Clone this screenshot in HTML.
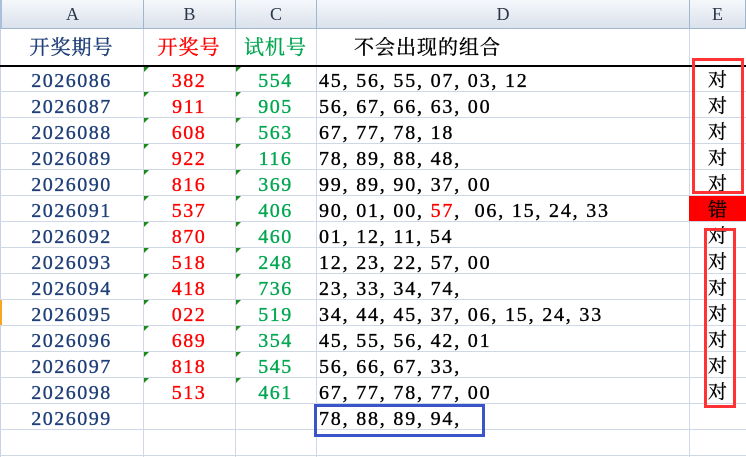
<!DOCTYPE html>
<html><head><meta charset="utf-8"><style>
*{margin:0;padding:0;box-sizing:border-box}
body{width:746px;height:457px;overflow:hidden;background:#fff;position:relative;font-family:"Liberation Serif","Noto Serif CJK SC",serif}
.hd{position:absolute;top:0;height:29px;background:linear-gradient(#f5f7fb,#dbe2ec);border-right:1px solid #9eb6ce;border-bottom:1px solid #9eb6ce;text-align:center;font-size:18px;line-height:29px;color:#2a3548}
.vl{position:absolute;top:29px;bottom:0;width:1px;background:#d0d7e5}
.hl{position:absolute;left:0;width:746px;height:1px;background:#d0d7e5}
.c{position:absolute;height:26px;line-height:30px;font-size:20px;letter-spacing:1.5px;white-space:nowrap;-webkit-text-stroke:0.35px currentColor}
.a{left:0;width:143px;text-align:center;color:#1f3f78}
.b{left:143px;width:92px;text-align:center;color:#f00}
.cc{left:235px;width:81px;text-align:center;color:#00a650}
.d{left:319px;color:#000;letter-spacing:1.8px}
.e{left:689px;width:57px;text-align:center;color:#000;letter-spacing:0;font-size:19px}
.t{font-size:20px;letter-spacing:1px;line-height:28px}
.tri{position:absolute;width:0;height:0;border-top:5px solid #1a8a1a;border-right:5px solid transparent}
</style></head><body>
<div class="hd" style="left:0;width:144px;border-left:2px solid #a9c0da">A</div>
<div class="hd" style="left:144px;width:92px">B</div>
<div class="hd" style="left:236px;width:81px">C</div>
<div class="hd" style="left:317px;width:373px">D</div>
<div class="hd" style="left:690px;width:56px">E</div>
<div class="vl" style="left:0;background:#c8d2e2"></div>
<div class="vl" style="left:143px"></div>
<div class="vl" style="left:235px"></div>
<div class="vl" style="left:316px"></div>
<div class="vl" style="left:689px"></div>
<div class="hl" style="top:65px;height:2px;background:#000"></div>
<div class="hl" style="top:91px"></div><div class="hl" style="top:117px"></div><div class="hl" style="top:143px"></div><div class="hl" style="top:169px"></div><div class="hl" style="top:195px"></div><div class="hl" style="top:221px"></div><div class="hl" style="top:247px"></div><div class="hl" style="top:273px"></div><div class="hl" style="top:299px"></div><div class="hl" style="top:325px"></div><div class="hl" style="top:351px"></div><div class="hl" style="top:377px"></div><div class="hl" style="top:403px"></div><div class="hl" style="top:429px"></div><div class="hl" style="top:455px"></div>
<div style="position:absolute;left:0;top:300px;width:2px;height:25px;background:#f5a623"></div>
<div class="c a t" style="top:34px">开奖期号</div>
<div class="c b t" style="top:34px">开奖号</div>
<div class="c cc t" style="top:34px">试机号</div>
<div class="c t" style="top:34px;left:354px;color:#000">不会出现的组合</div>

<div style="position:absolute;left:689px;top:196px;width:57px;height:25px;background:#f00"></div>
<div class="c a" style="top:66px">2026086</div><div class="c b" style="top:66px">382</div><div class="c cc" style="top:66px">554</div><div class="c d" style="top:66px">45, 56, 55, 07, 03, 12</div><div class="c e" style="top:66px">对</div>
<div class="c a" style="top:92px">2026087</div><div class="c b" style="top:92px">911</div><div class="c cc" style="top:92px">905</div><div class="c d" style="top:92px">56, 67, 66, 63, 00</div><div class="c e" style="top:92px">对</div>
<div class="c a" style="top:118px">2026088</div><div class="c b" style="top:118px">608</div><div class="c cc" style="top:118px">563</div><div class="c d" style="top:118px">67, 77, 78, 18</div><div class="c e" style="top:118px">对</div>
<div class="c a" style="top:144px">2026089</div><div class="c b" style="top:144px">922</div><div class="c cc" style="top:144px">116</div><div class="c d" style="top:144px">78, 89, 88, 48,</div><div class="c e" style="top:144px">对</div>
<div class="c a" style="top:170px">2026090</div><div class="c b" style="top:170px">816</div><div class="c cc" style="top:170px">369</div><div class="c d" style="top:170px">99, 89, 90, 37, 00</div><div class="c e" style="top:170px">对</div>
<div class="c a" style="top:196px">2026091</div><div class="c b" style="top:196px">537</div><div class="c cc" style="top:196px">406</div><div class="c d" style="top:196px">90, 01, 00, <span style="color:#f00">57</span>,&nbsp; 06, 15, 24, 33</div><div class="c e" style="top:196px">错</div>
<div class="c a" style="top:222px">2026092</div><div class="c b" style="top:222px">870</div><div class="c cc" style="top:222px">460</div><div class="c d" style="top:222px">01, 12, 11, 54</div><div class="c e" style="top:222px">对</div>
<div class="c a" style="top:248px">2026093</div><div class="c b" style="top:248px">518</div><div class="c cc" style="top:248px">248</div><div class="c d" style="top:248px">12, 23, 22, 57, 00</div><div class="c e" style="top:248px">对</div>
<div class="c a" style="top:274px">2026094</div><div class="c b" style="top:274px">418</div><div class="c cc" style="top:274px">736</div><div class="c d" style="top:274px">23, 33, 34, 74,</div><div class="c e" style="top:274px">对</div>
<div class="c a" style="top:300px">2026095</div><div class="c b" style="top:300px">022</div><div class="c cc" style="top:300px">519</div><div class="c d" style="top:300px">34, 44, 45, 37, 06, 15, 24, 33</div><div class="c e" style="top:300px">对</div>
<div class="c a" style="top:326px">2026096</div><div class="c b" style="top:326px">689</div><div class="c cc" style="top:326px">354</div><div class="c d" style="top:326px">45, 55, 56, 42, 01</div><div class="c e" style="top:326px">对</div>
<div class="c a" style="top:352px">2026097</div><div class="c b" style="top:352px">818</div><div class="c cc" style="top:352px">545</div><div class="c d" style="top:352px">56, 66, 67, 33,</div><div class="c e" style="top:352px">对</div>
<div class="c a" style="top:378px">2026098</div><div class="c b" style="top:378px">513</div><div class="c cc" style="top:378px">461</div><div class="c d" style="top:378px">67, 77, 78, 77, 00</div><div class="c e" style="top:378px">对</div>
<div class="c a" style="top:404px">2026099</div><div class="c d" style="top:404px">78, 88, 89, 94,</div>

<div class="tri" style="left:144px;top:67px"></div><div class="tri" style="left:236px;top:67px"></div>
<div class="tri" style="left:144px;top:92px"></div><div class="tri" style="left:236px;top:92px"></div>
<div class="tri" style="left:144px;top:118px"></div><div class="tri" style="left:236px;top:118px"></div>
<div class="tri" style="left:144px;top:144px"></div><div class="tri" style="left:236px;top:144px"></div>
<div class="tri" style="left:144px;top:170px"></div><div class="tri" style="left:236px;top:170px"></div>
<div class="tri" style="left:144px;top:196px"></div><div class="tri" style="left:236px;top:196px"></div>
<div class="tri" style="left:144px;top:222px"></div><div class="tri" style="left:236px;top:222px"></div>
<div class="tri" style="left:144px;top:248px"></div><div class="tri" style="left:236px;top:248px"></div>
<div class="tri" style="left:144px;top:274px"></div><div class="tri" style="left:236px;top:274px"></div>
<div class="tri" style="left:144px;top:300px"></div><div class="tri" style="left:236px;top:300px"></div>
<div class="tri" style="left:144px;top:326px"></div><div class="tri" style="left:236px;top:326px"></div>
<div class="tri" style="left:144px;top:352px"></div><div class="tri" style="left:236px;top:352px"></div>
<div class="tri" style="left:144px;top:378px"></div><div class="tri" style="left:236px;top:378px"></div>

<div style="position:absolute;left:692px;top:58px;width:52px;height:136px;border:3px solid #f33"></div>
<div style="position:absolute;left:704px;top:228px;width:32px;height:180px;border:3px solid #f33"></div>
<div style="position:absolute;left:314px;top:404px;width:171px;height:33px;border:3px solid #3a55c8"></div>
</body></html>
